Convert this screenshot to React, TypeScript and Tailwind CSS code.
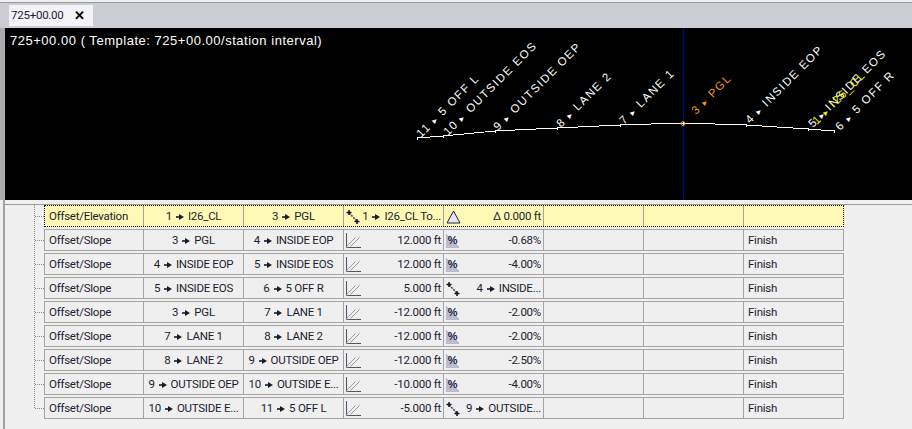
const FONT = "font-['Roboto',sans-serif]";

type Row = {
  name: string;
  from: [string, string];
  to: [string, string];
  icon: "point" | "slope";
  value: string;
  icon2: "triangle" | "percent" | "point";
  value2: string | [string, string];
  last?: string;
  selected?: boolean;
};

const rows: Row[] = [
  { name: "Offset/Elevation", from: ["1", "I26_CL"], to: ["3", "PGL"], icon: "point", value: "", icon2: "triangle", value2: "Δ 0.000 ft", selected: true },
  { name: "Offset/Slope", from: ["3", "PGL"], to: ["4", "INSIDE EOP"], icon: "slope", value: "12.000 ft", icon2: "percent", value2: "-0.68%", last: "Finish" },
  { name: "Offset/Slope", from: ["4", "INSIDE EOP"], to: ["5", "INSIDE EOS"], icon: "slope", value: "12.000 ft", icon2: "percent", value2: "-4.00%", last: "Finish" },
  { name: "Offset/Slope", from: ["5", "INSIDE EOS"], to: ["6", "5 OFF R"], icon: "slope", value: "5.000 ft", icon2: "point", value2: ["4", "INSIDE..."], last: "Finish" },
  { name: "Offset/Slope", from: ["3", "PGL"], to: ["7", "LANE 1"], icon: "slope", value: "-12.000 ft", icon2: "percent", value2: "-2.00%", last: "Finish" },
  { name: "Offset/Slope", from: ["7", "LANE 1"], to: ["8", "LANE 2"], icon: "slope", value: "-12.000 ft", icon2: "percent", value2: "-2.00%", last: "Finish" },
  { name: "Offset/Slope", from: ["8", "LANE 2"], to: ["9", "OUTSIDE OEP"], icon: "slope", value: "-12.000 ft", icon2: "percent", value2: "-2.50%", last: "Finish" },
  { name: "Offset/Slope", from: ["9", "OUTSIDE OEP"], to: ["10", "OUTSIDE E..."], icon: "slope", value: "-10.000 ft", icon2: "percent", value2: "-4.00%", last: "Finish" },
  { name: "Offset/Slope", from: ["10", "OUTSIDE E..."], to: ["11", "5 OFF L"], icon: "slope", value: "-5.000 ft", icon2: "point", value2: ["9", "OUTSIDE..."], last: "Finish" },
];

const labels = [
  { x: 421, y: 138, n: "11", text: "5 OFF L", fill: "#ffffff" },
  { x: 448, y: 136, n: "10", text: "OUTSIDE EOS", fill: "#ffffff" },
  { x: 498, y: 131, n: "9", text: "OUTSIDE OEP", fill: "#ffffff" },
  { x: 561, y: 128, n: "8", text: "LANE 2", fill: "#ffffff" },
  { x: 624, y: 125, n: "7", text: "LANE 1", fill: "#ffffff" },
  { x: 696, y: 115, n: "3", text: "PGL", fill: "#f29a11" },
  { x: 750, y: 124, n: "4", text: "INSIDE EOP", fill: "#ffffff" },
  { x: 813, y: 128, n: "5", text: "INSIDE EOS", fill: "#ffffff" },
  { x: 817, y: 125, n: "1", text: "I26_CL", fill: "#f5f500" },
  { x: 840, y: 131, n: "6", text: "5 OFF R", fill: "#ffffff" },
];

const points: [number, number][] = [
  [417, 138], [443, 136], [495, 131], [557, 128], [620, 125], [683, 123], [746, 125], [808, 129], [834, 131],
];

function Arrow() {
  return (
    <svg width="8" height="6" viewBox="0 0 8 6" className="mx-[4px] shrink-0">
      <path d="M0 2.200h3.500v1.600H0z" fill="#1a1a2a" />
      <path d="M3 0 8 3 3 6z" fill="#1a1a2a" />
    </svg>
  );
}

function PointIcon() {
  return (
    <svg width="14" height="14" viewBox="0 0 14 14" className="shrink-0">
      <path d="M3 3 11 11" stroke="#444455" strokeWidth="1.500" strokeDasharray="2 1" />
      <path d="M.500 2.500h5M3 0v5M8.500 11.500h5M11 9v5" stroke="#111122" strokeWidth="1.500" />
    </svg>
  );
}

function SlopeIcon() {
  return (
    <svg width="15" height="15" viewBox="0 0 15 15" className="shrink-0">
      <path d="M.500 0v14.500H15" stroke="#55556a" fill="none" />
      <path d="M.500 13.500 9.500 4.500M4.500 13.500 13.500 4.500" stroke="#9a9aa5" fill="none" />
    </svg>
  );
}

function PercentIcon() {
  return (
    <span className="flex h-[14px] w-[13px] shrink-0 items-center justify-center bg-[linear-gradient(45deg,#bcbcd0_55%,transparent_55%)] font-['Liberation_Sans',sans-serif] text-[11px] leading-none font-bold tracking-[-0.5px] text-[#2a2a48]">
      %
    </span>
  );
}

function TriangleIcon() {
  return (
    <svg width="15" height="14" viewBox="0 0 15 14" className="shrink-0">
      <path d="M7.500 1 14 13H1z" fill="#e4e4f4" stroke="#222244" strokeWidth="1" />
    </svg>
  );
}

function Ref({ value, className = "" }: { value: [string, string]; className?: string }) {
  return (
    <span className={`flex items-center whitespace-nowrap ${className}`}>
      {value[0]}
      <Arrow />
      {value[1]}
    </span>
  );
}

function TableRow({ row }: { row: Row }) {
  const cell = "flex h-full min-w-0 items-center border-r border-[#a3a3a3] pt-px";
  return (
    <div className="flex items-center">
      <div className="h-0 w-[9px] border-t border-dotted border-[#8a8a8a]" />
      <div
        className={`box-content grid h-[20px] w-[798px] grid-cols-[99px_repeat(6,100px)_99px] items-center border ${
          row.selected ? "border-dotted border-black bg-[#fff9b5]" : "border-[#a3a3a3] bg-[#efefef]"
        }`}
      >
        <div className={`${cell} px-[4px]`}>{row.name}</div>
        <div className={`${cell} justify-center`}><Ref value={row.from} /></div>
        <div className={`${cell} justify-center`}><Ref value={row.to} /></div>
        <div className={`${cell} px-[2px]`}>
          {row.icon === "point" ? <PointIcon /> : <SlopeIcon />}
          {row.value ? (
            <span className="ml-auto whitespace-nowrap">{row.value}</span>
          ) : (
            <Ref value={["1", "I26_CL To..."]} className="ml-auto" />
          )}
        </div>
        <div className={`${cell} px-[2px]`}>
          {row.icon2 === "triangle" && <TriangleIcon />}
          {row.icon2 === "percent" && <PercentIcon />}
          {row.icon2 === "point" && <PointIcon />}
          {typeof row.value2 === "string" ? (
            <span className="ml-auto whitespace-nowrap">{row.value2}</span>
          ) : (
            <Ref value={row.value2} className="ml-auto" />
          )}
        </div>
        <div className={cell} />
        <div className={cell} />
        <div className="flex h-full items-center px-[4px] pt-px">{row.last}</div>
      </div>
    </div>
  );
}

function Section() {
  return (
    <svg width="907" height="172" viewBox="5 28 907 172" className="block">
      <path d="M683.500 28v172" stroke="#0000a0" strokeWidth="1" shapeRendering="crispEdges" />
      <polyline
        points={points.map((p) => p.join(",")).join(" ")}
        fill="none"
        stroke="#ffffff"
        strokeWidth="1"
        shapeRendering="crispEdges"
      />
      {points.map(([x, y]) => (
        <path key={x} d={`M${x}.500 ${y - 1}v3`} stroke="#ffffff" shapeRendering="crispEdges" />
      ))}
      <circle cx="683" cy="123.500" r="2" fill="none" stroke="#f29a11" />
      {labels.map((l) => (
        <text
          key={l.text}
          x={l.x}
          y={l.y}
          fill={l.fill}
          fontSize="11.500"
          letterSpacing="1.500"
          fontFamily="'Liberation Sans', sans-serif"
          transform={`rotate(-45 ${l.x} ${l.y})`}
        >
          {l.n} <tspan fontSize="9">▸</tspan> {l.text}
        </text>
      ))}
    </svg>
  );
}

export default function App() {
  return (
    <div className={`flex h-[429px] w-[912px] flex-col overflow-hidden bg-[#f0f0f0] text-[11.5px] tracking-[-0.25px] text-[#1c1c30] ${FONT}`}>
      <div className="h-[3px] shrink-0 border-b border-[#9a9a9a] bg-[#f0f0f0]" />
      <div className="flex h-[25px] shrink-0 items-start bg-[#cdced3] pt-[2px] pl-[9px]">
        <div className="flex h-[21px] w-[84px] items-center justify-between bg-[#f2f2f8] pr-[8px] pl-[2px] text-[11.5px]">
          <span>725+00.00</span>
          <span className="text-[13px] leading-none font-bold text-black">✕</span>
        </div>
      </div>
      <div className="flex flex-1 flex-col">
        <div className="flex h-[172px] shrink-0">
          <div className="w-[5px] shrink-0 bg-[#a9a9ad]" />
          <div className="relative h-[172px] flex-1 bg-black">
            <Section />
            <span className="absolute top-[3px] left-[5px] font-['Liberation_Sans',sans-serif] text-[13px] tracking-[0.52px] whitespace-nowrap text-white">
              725+00.00 ( Template: 725+00.00/station interval)
            </span>
          </div>
        </div>
        <div className="flex flex-1">
          <div className="ml-[3px] w-[2px] shrink-0 bg-[#a3a3a3]" />
          <div className="flex-1">
            <div className="h-[5px] border-b border-[#9a9a9a]" />
            <div className="ml-[29px] flex items-start">
              <div className="h-[203px] border-l border-dotted border-[#8a8a8a]" />
              <div className="flex flex-col gap-[2px]">
                {rows.map((row, i) => (
                  <TableRow key={i} row={row} />
                ))}
              </div>
            </div>
          </div>
        </div>
      </div>
    </div>
  );
}
